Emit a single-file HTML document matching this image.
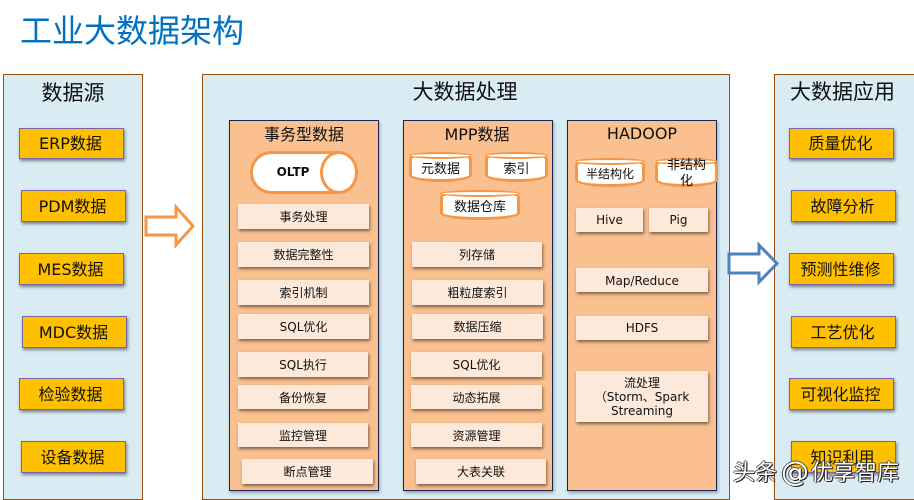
<!DOCTYPE html>
<html><head><meta charset="utf-8">
<style>
html,body{margin:0;padding:0;background:#fff;}
#p{position:relative;width:914px;height:500px;overflow:hidden;background:#fff;font-family:"DejaVu Sans","Noto Sans CJK SC",sans-serif;color:#111;}
#p div{position:absolute;box-sizing:border-box;}
.t{white-space:nowrap;text-align:center;}
.panel{background:#d9ecf3;border:1px solid #9c4f0c;}
.col{background:#fac090;border:1.5px solid #1c2454;box-shadow:1px 2px 3px rgba(0,0,0,.3);}
.y{background:#ffc000;border:1px solid #7a64a8;box-shadow:1px 2px 3px rgba(0,0,0,.45);font-size:16px;display:flex;align-items:center;justify-content:center;white-space:nowrap;padding:0 2px 3px 0;}
.i{background:#fde9d9;box-shadow:1px 2px 3px rgba(0,0,0,.5);font-size:12px;display:flex;align-items:center;justify-content:center;white-space:nowrap;}
.c{background:#fff;border:3px solid #f79646;border-radius:50%/7px;font-size:13px;text-align:center;white-space:nowrap;}
.c:before{content:"";position:absolute;left:-3px;right:-3px;top:-3px;height:7px;border:2.5px solid #f79646;border-radius:50%;box-sizing:border-box;background:#fff;}
.c span{position:relative;top:1px;}
.w{line-height:28px;color:#fff;white-space:nowrap;text-shadow:1px 1px 0 #222,-1px 0 0 #444,0 -1px 0 #555,1px 0 1px #333;}
</style></head><body>
<div id="p">
<div class="t" style="left:20px;top:10px;font-size:32px;line-height:42px;color:#0070c0;">工业大数据架构</div>

<div class="panel" style="left:3px;top:74px;width:140px;height:426px;"></div>
<div class="panel" style="left:202px;top:74px;width:528px;height:426px;"></div>
<div class="panel" style="left:774px;top:74px;width:145px;height:426px;"></div>

<div class="t" style="left:3px;top:79px;width:140px;font-size:21px;line-height:28px;">数据源</div>
<div class="t" style="left:202px;top:78px;width:526px;font-size:21px;line-height:28px;">大数据处理</div>
<div class="t" style="left:774px;top:78px;width:137px;font-size:21px;line-height:28px;">大数据应用</div>

<div class="y" style="left:19px;top:128px;width:105px;height:31px;">ERP数据</div>
<div class="y" style="left:21px;top:190px;width:105px;height:32px;">PDM数据</div>
<div class="y" style="left:19px;top:253px;width:105px;height:32px;">MES数据</div>
<div class="y" style="left:22px;top:316px;width:105px;height:32px;">MDC数据</div>
<div class="y" style="left:19px;top:378px;width:105px;height:32px;">检验数据</div>
<div class="y" style="left:21px;top:441px;width:105px;height:32px;">设备数据</div>

<div class="y" style="left:789px;top:128px;width:105px;height:31px;">质量优化</div>
<div class="y" style="left:791px;top:190px;width:105px;height:32px;">故障分析</div>
<div class="y" style="left:789px;top:253px;width:105px;height:32px;">预测性维修</div>
<div class="y" style="left:791px;top:316px;width:105px;height:32px;">工艺优化</div>
<div class="y" style="left:789px;top:378px;width:105px;height:32px;">可视化监控</div>
<div class="y" style="left:791px;top:441px;width:105px;height:32px;">知识利用</div>

<svg style="position:absolute;left:140px;top:200px" width="60" height="50"><path d="M6 17H36V7L53 26L36 45V35H6Z" fill="#fff" stroke="#f79646" stroke-width="3"/></svg>
<svg style="position:absolute;left:725px;top:240px" width="60" height="50"><path d="M4 14H34V5L52 23.500L34 42V33H4Z" fill="#fff" stroke="#4f81bd" stroke-width="3"/></svg>

<div class="col" style="left:229px;top:120px;width:150px;height:371px;"></div>
<div class="col" style="left:403px;top:120px;width:150px;height:371px;"></div>
<div class="col" style="left:567px;top:120px;width:150px;height:371px;"></div>

<div class="t" style="left:229px;top:124px;width:150px;font-size:16px;line-height:22px;">事务型数据</div>
<div class="t" style="left:402px;top:124px;width:150px;font-size:16px;line-height:22px;">MPP数据</div>
<div class="t" style="left:567px;top:123px;width:150px;font-size:16px;line-height:22px;">HADOOP</div>

<div style="left:250px;top:151px;width:108px;height:43px;background:#fff;border:3px solid #f79646;border-radius:22px;"></div>
<div style="left:320px;top:151px;width:38px;height:43px;background:#fff;border:3px solid #f79646;border-radius:50%;"></div>
<div class="t" style="left:268px;top:164px;width:50px;font-size:12px;font-weight:bold;line-height:16px;">OLTP</div>

<div class="i" style="left:238px;top:204px;width:131px;height:25px;">事务处理</div>
<div class="i" style="left:238px;top:242px;width:131px;height:25px;">数据完整性</div>
<div class="i" style="left:238px;top:280px;width:131px;height:25px;">索引机制</div>
<div class="i" style="left:238px;top:314px;width:131px;height:25px;">SQL优化</div>
<div class="i" style="left:238px;top:352px;width:130px;height:25px;">SQL执行</div>
<div class="i" style="left:238px;top:385px;width:130px;height:24px;">备份恢复</div>
<div class="i" style="left:238px;top:423px;width:130px;height:24px;">监控管理</div>
<div class="i" style="left:242px;top:459px;width:131px;height:25px;">断点管理</div>

<div class="c" style="left:409px;top:152px;width:63px;height:30px;line-height:27px;"><span>元数据</span></div>
<div class="c" style="left:485px;top:152px;width:63px;height:30px;line-height:27px;"><span>索引</span></div>
<div class="c" style="left:440px;top:190px;width:80px;height:30px;line-height:27px;"><span>数据仓库</span></div>

<div class="i" style="left:412px;top:242px;width:130px;height:25px;">列存储</div>
<div class="i" style="left:412px;top:280px;width:131px;height:25px;">粗粒度索引</div>
<div class="i" style="left:412px;top:314px;width:131px;height:25px;">数据压缩</div>
<div class="i" style="left:411px;top:352px;width:131px;height:25px;">SQL优化</div>
<div class="i" style="left:411px;top:385px;width:131px;height:24px;">动态拓展</div>
<div class="i" style="left:411px;top:423px;width:131px;height:24px;">资源管理</div>
<div class="i" style="left:416px;top:459px;width:130px;height:25px;">大表关联</div>

<div class="c" style="left:575px;top:158px;width:70px;height:29px;font-size:12px;line-height:27px;"><span style="top:0">半结构化</span></div>
<div class="c" style="left:655px;top:158px;width:63px;height:29px;"></div>
<div class="t" style="left:655px;top:158px;width:63px;font-size:13px;line-height:16px;">非结构<br>化</div>

<div class="i" style="left:576px;top:208px;width:67px;height:24px;">Hive</div>
<div class="i" style="left:649px;top:208px;width:59px;height:24px;">Pig</div>
<div class="i" style="left:576px;top:268px;width:132px;height:24px;padding-top:1px;">Map/Reduce</div>
<div class="i" style="left:576px;top:316px;width:132px;height:24px;">HDFS</div>
<div class="i" style="left:576px;top:371px;width:132px;height:51px;"></div>
<div class="t" style="left:576px;top:376px;width:132px;font-size:12px;line-height:14px;">流处理<br>（Storm、Spark<br>Streaming</div>

<div class="w" style="left:733px;top:460px;font-size:22px;">头条</div>
<div class="w" style="left:781px;top:458px;font-size:28px;">@</div>
<div class="w" style="left:811px;top:460px;font-size:22px;">优享智库</div>
</div>
</body></html>
